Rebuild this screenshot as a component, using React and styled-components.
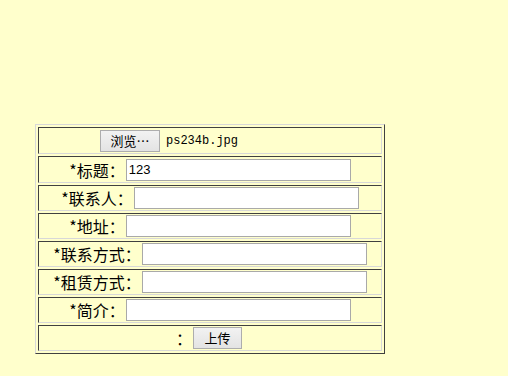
import React from "react";
import styled, { createGlobalStyle } from "styled-components";

const Global = createGlobalStyle`
  html, body { margin: 0; padding: 0; background: #ffffcc; }
  body { font-family: "Noto Sans CJK SC", "Liberation Sans", sans-serif; }
`;

const Page = styled.div`
  padding: 124px 0 0 35px;
  min-height: 376px;
  box-sizing: border-box;
`;

const Frame = styled.div`
  width: 350px;
  box-sizing: border-box;
  border: 1px solid;
  border-color: #d8d8d8 #404040 #404040 #d8d8d8;
  padding: 2px;
  display: flex;
  flex-direction: column;
  gap: 2px;
`;

const Row = styled.div`
  box-sizing: border-box;
  height: ${(p) => p.$h || 26}px;
  border: 1px solid;
  border-color: #404040 #d8d8d8 #d8d8d8 #404040;
  display: flex;
  align-items: center;
  justify-content: center;
  padding: 1px;
`;

const Label = styled.span`
  font-size: 16px;
  line-height: 20px;
  color: #000;
  white-space: nowrap;
  padding-right: 1px;
`;

const TextInput = styled.input`
  box-sizing: border-box;
  width: 225px;
  height: 22px;
  margin: 0;
  padding: 1px 2px;
  border: 1px solid #a9a9a9;
  background: #fff;
  font-family: "Liberation Sans", Arial, sans-serif;
  font-size: 13px;
  color: #000;
  outline: none;
`;

const Button = styled.button`
  box-sizing: border-box;
  height: 22px;
  width: ${(p) => p.$w}px;
  margin: 0;
  padding: 0;
  border: 1px solid #adadad;
  border-radius: 0;
  background: linear-gradient(#f2f2f2, #e3e3e3);
  font-family: "Noto Sans CJK SC", "Liberation Sans", sans-serif;
  font-size: 13px;
  line-height: 20px;
  color: #000;
`;

const FileField = styled.div`
  width: 220px;
  display: flex;
  align-items: center;
  gap: 6px;
`;

const FileName = styled.span`
  font-family: "Liberation Mono", "DejaVu Sans Mono", monospace;
  font-size: 12px;
  color: #000;
`;

const Colon = styled.span`
  font-size: 16px;
  line-height: 20px;
  width: 14px;
  margin-right: 1px;
  color: #000;
  text-align: left;
  transform: translateX(-2px);
`;

const fields = [
  { label: "*标题：", value: "123", h: 27 },
  { label: "*联系人：", value: "" },
  { label: "*地址：", value: "" },
  { label: "*联系方式：", value: "" },
  { label: "*租赁方式：", value: "" },
  { label: "*简介：", value: "" },
];

export default function App() {
  return (
    <>
      <Global />
      <Page>
        <Frame>
          <Row $h={27}>
            <FileField>
              <Button type="button" $w={60}>浏览…</Button>
              <FileName>ps234b.jpg</FileName>
            </FileField>
          </Row>
          {fields.map((f) => (
            <Row key={f.label} $h={f.h}>
              <Label>{f.label}</Label>
              <TextInput type="text" defaultValue={f.value} />
            </Row>
          ))}
          <Row>
            <Colon>：</Colon>
            <Button type="button" $w={49}>上传</Button>
          </Row>
        </Frame>
      </Page>
    </>
  );
}
